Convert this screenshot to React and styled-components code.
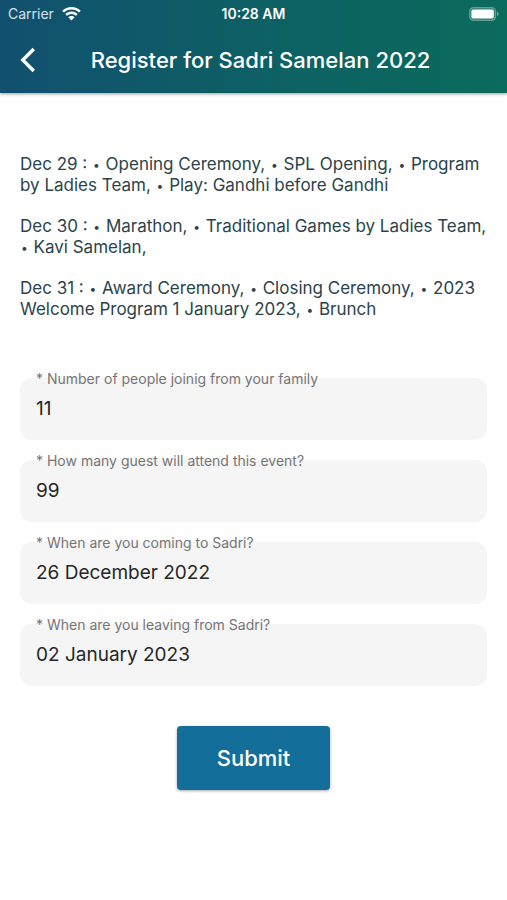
import styled, { createGlobalStyle } from "styled-components";
import { Fragment, useState } from "react";

const Color = {
  White: "#ffffff",
  Text: "#2b434c",
  Label: "#757575",
  Value: "#262626",
  Field: "#f5f5f5",
  Primary: "#136f99",
};

const schedule = [
  {
    date: "Dec 29",
    events: [
      "Opening Ceremony,",
      "SPL Opening,",
      "Program by Ladies Team,",
      "Play: Gandhi before Gandhi",
    ],
  },
  {
    date: "Dec 30",
    events: ["Marathon,", "Traditional Games by Ladies Team,", "Kavi Samelan,"],
  },
  {
    date: "Dec 31",
    events: [
      "Award Ceremony,",
      "Closing Ceremony,",
      "2023 Welcome Program 1 January 2023,",
      "Brunch",
    ],
  },
];

const fields = [
  { name: "people", label: "* Number of people joinig from your family" },
  { name: "guests", label: "* How many guest will attend this event?" },
  { name: "arrival", label: "* When are you coming to Sadri?" },
  { name: "departure", label: "* When are you leaving from Sadri?" },
];

const App = () => {
  const [values, setValues] = useState({
    people: "11",
    guests: "99",
    arrival: "26 December 2022",
    departure: "02 January 2023",
  });

  return (
    <Page>
      <GlobalStyle />
      <Header>
        <StatusBar>
          <Carrier>
            Carrier
            <WifiIcon />
          </Carrier>
          <Time>10:28 AM</Time>
          <BatteryIcon />
        </StatusBar>
        <TitleBar>
          <BackButton type="button" aria-label="Back">
            <BackIcon />
          </BackButton>
          <Title>Register for Sadri Samelan 2022</Title>
        </TitleBar>
      </Header>
      <Content>
        <Schedule>
          {schedule.map(({ date, events }) => (
            <Day key={date}>
              {`${date} : `}
              {events.map((event) => (
                <Fragment key={event}>
                  <Bullet>•</Bullet>
                  {` ${event} `}
                </Fragment>
              ))}
            </Day>
          ))}
        </Schedule>
        <Form onSubmit={(e) => e.preventDefault()}>
          {fields.map(({ name, label }) => (
            <Field key={name}>
              <Label htmlFor={name}>{label}</Label>
              <Input
                id={name}
                value={values[name]}
                onChange={(e) =>
                  setValues({ ...values, [name]: e.target.value })
                }
              />
            </Field>
          ))}
          <SubmitButton type="submit">Submit</SubmitButton>
        </Form>
      </Content>
    </Page>
  );
};

const WifiIcon = () => {
  return (
    <svg width="19" height="14" viewBox="0 0 19 14" fill="#fff">
      <path d="M9.5 0C5.9 0 2.6 1.4 0.2 3.7L2 5.6C4 3.7 6.6 2.6 9.5 2.6S15 3.7 17 5.6L18.8 3.7C16.4 1.4 13.1 0 9.5 0Z" />
      <path d="M9.5 4.5C7.1 4.5 4.9 5.4 3.3 7L5.1 8.9C6.2 7.8 7.8 7.1 9.5 7.1S12.8 7.8 13.9 8.9L15.7 7C14.1 5.4 11.9 4.5 9.5 4.5Z" />
      <path d="M9.5 8.9C8.3 8.9 7.2 9.4 6.4 10.2L9.5 13.5L12.6 10.2C11.8 9.4 10.7 8.9 9.5 8.9Z" />
    </svg>
  );
};

const BatteryIcon = () => {
  return (
    <svg width="30" height="14" viewBox="0 0 30 14">
      <rect
        x="0.6"
        y="0.6"
        width="26"
        height="12.8"
        rx="4"
        fill="#fff"
        fillOpacity="0.15"
        stroke="#fff"
        strokeOpacity="0.3"
        strokeWidth="1.2"
      />
      <rect x="2.4" y="2.4" width="22.4" height="9.2" rx="2" fill="#fff" />
      <path
        d="M28 4.8C29 5.2 29.7 6 29.7 7S29 8.8 28 9.2Z"
        fill="#fff"
        fillOpacity="0.4"
      />
    </svg>
  );
};

const BackIcon = () => {
  return (
    <svg width="16" height="26" viewBox="0 0 16 26" fill="none">
      <path d="M13.8 2L2.8 13L13.8 24" stroke="#fff" strokeWidth="3.4" />
    </svg>
  );
};

const GlobalStyle = createGlobalStyle`
  * {
    box-sizing: border-box;
  }

  body {
    margin: 0;
    background-color: ${Color.White};
    font-family: Inter, "Liberation Sans", sans-serif;
  }
`;

const Page = styled.div`
  min-height: 100vh;
  background-color: ${Color.White};
`;

const Header = styled.header`
  background: linear-gradient(to right, #11506f, #0d6163 55%, #0b6b5c);
  box-shadow: 0 1px 3px rgba(0, 0, 0, 0.4);
  color: ${Color.White};
`;

const StatusBar = styled.div`
  display: grid;
  grid-template-columns: 1fr auto 1fr;
  align-items: center;
  height: 27px;
  padding: 0 8px;

  > :last-child {
    justify-self: end;
  }
`;

const Carrier = styled.div`
  display: flex;
  align-items: center;
  gap: 8px;
  font-size: 14px;
  color: #d5e3e8;
`;

const Time = styled.div`
  font-size: 14px;
  font-weight: 600;
`;

const TitleBar = styled.div`
  display: grid;
  grid-template-columns: 56px 1fr 42px;
  align-items: center;
  height: 66px;
`;

const BackButton = styled.button`
  display: flex;
  align-items: center;
  justify-content: center;
  height: 48px;
  padding: 0;
  border: none;
  background: none;
  cursor: pointer;
`;

const Title = styled.h1`
  margin: 0;
  font-size: 22px;
  font-weight: 500;
  text-align: center;
  white-space: nowrap;
`;

const Content = styled.main`
  padding: 61px 20px 40px;
`;

const Schedule = styled.section`
  display: flex;
  flex-direction: column;
  gap: 20px;
  color: ${Color.Text};
  font-size: 17px;
  line-height: 21px;
`;

const Day = styled.p`
  margin: 0;
`;

const Bullet = styled.span`
  margin: 0 1px;
  font-size: 12px;
  line-height: 1;
  vertical-align: 1px;
`;

const Form = styled.form`
  display: flex;
  flex-direction: column;
  gap: 20px;
  margin-top: 58px;
`;

const Field = styled.div`
  position: relative;
`;

/* floats over the top edge of the input */
const Label = styled.label`
  position: absolute;
  top: -8px;
  left: 16px;
  color: ${Color.Label};
  font-size: 14px;
  line-height: 18px;
`;

const Input = styled.input`
  display: block;
  width: 100%;
  height: 62px;
  padding: 0 16px 2px;
  border: none;
  border-radius: 12px;
  outline: none;
  background-color: ${Color.Field};
  color: ${Color.Value};
  font-family: inherit;
  font-size: 19px;
`;

const SubmitButton = styled.button`
  align-self: center;
  height: 64px;
  margin-top: 20px;
  padding: 0 40px;
  border: none;
  border-radius: 4px;
  background-color: ${Color.Primary};
  box-shadow: 0 1px 3px rgba(0, 0, 0, 0.35);
  color: ${Color.White};
  font-family: inherit;
  font-size: 22px;
  font-weight: 500;
  cursor: pointer;
`;

export default App;
